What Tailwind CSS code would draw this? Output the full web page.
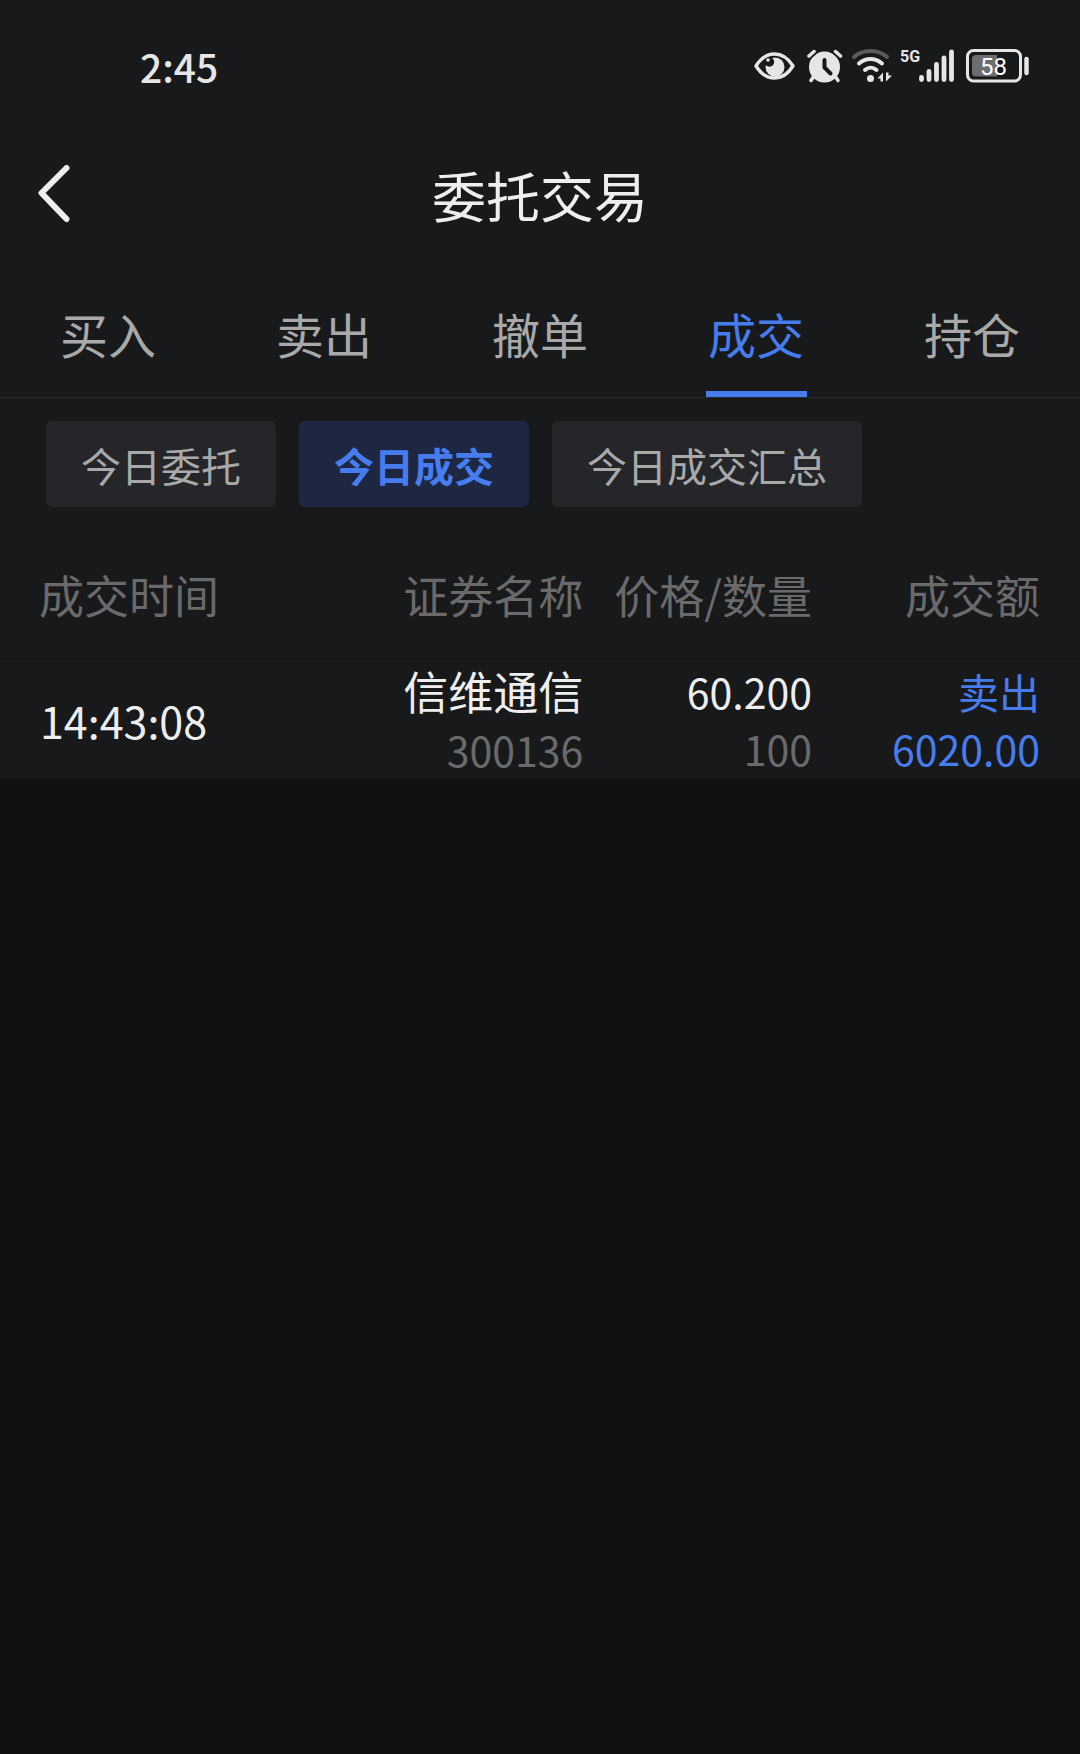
<!DOCTYPE html>
<html lang="zh-CN">
<head>
    <meta charset="UTF-8">
    <meta name="viewport" content="width=device-width, initial-scale=1.0">
    <title>委托交易</title>
    <script src="https://cdn.jsdelivr.net/npm/@tailwindcss/browser@4"></script>
</head>
<body class="bg-[#101113] min-h-screen font-['Noto_Sans_CJK_SC',sans-serif] text-[#eeeeee]">
    <div class="bg-[#18191b]">
        <!-- Status bar -->
        <div class="flex h-[131px] items-center justify-between pl-[140px] pr-[50px] text-[#e6e6e6]">
            <span class="text-[39px] leading-[60px] font-medium">2:45</span>
            <div class="flex items-center gap-2">
                <svg class="mr-1" width="41" height="34" viewBox="0 0 41 34" fill="none">
                    <path d="M2 17C7 9 13 5 20.500 5S34 9 39 17C34 25 28 29 20.500 29S7 25 2 17Z" stroke="currentColor" stroke-width="3.400" stroke-linejoin="round"/>
                    <circle cx="21" cy="18" r="9.500" fill="currentColor"/>
                    <circle cx="15.500" cy="13" r="4.700" fill="#18191b"/>
                    <circle cx="14" cy="11" r="1.800" fill="currentColor"/>
                </svg>
                <svg width="36" height="34" viewBox="0 0 36 34" fill="none" stroke-linecap="round" stroke-linejoin="round">
                    <circle cx="17.500" cy="18" r="15.500" fill="currentColor"/>
                    <path d="M2 7L7 2.500M33.500 7L28.500 2.500" stroke="#18191b" stroke-width="7"/>
                    <path d="M2 7L7 2.500M33.500 7L28.500 2.500" stroke="currentColor" stroke-width="3.500"/>
                    <path d="M7 27L4 31.500M28 27L31 31.500" stroke="currentColor" stroke-width="3.500"/>
                    <path d="M17.500 11V18.500L23.500 24.500" stroke="#18191b" stroke-width="4"/>
                </svg>
                <svg width="41" height="34" viewBox="0 0 41 34" fill="none" stroke="currentColor" stroke-width="4" stroke-linecap="round">
                    <path d="M3 8C12 0 27 0 36 8" stroke="#5a5b5d"/>
                    <path d="M8 14.500C15 8.500 24 8.500 31 14.500"/>
                    <path d="M14 21C17.500 18 22 18 25.500 21"/>
                    <circle cx="19.500" cy="29.500" r="3.500" fill="currentColor" stroke="none"/>
                    <path d="M26.500 29.500L32 23.500V32.500H29.500V29.500ZM41 26.500L35 32.500V23.500H37.500V26.500Z" fill="currentColor" stroke="none"/>
                </svg>
                <div class="flex items-start">
                    <span class="w-[19px] font-[Roboto] text-[16px] leading-4 font-bold">5G</span>
                    <svg width="35" height="34" viewBox="0 0 35 34" fill="none" stroke="currentColor" stroke-width="4.800" stroke-linecap="round">
                        <path d="M2.500 28.500V30.500M10 22.500V30.500M17.500 15.500V30.500M25 9V30.500M32.500 3V30.500"/>
                    </svg>
                </div>
                <svg class="ml-1" width="64" height="34" viewBox="0 0 64 34" fill="none">
                    <rect x="1.500" y="1.500" width="53" height="30.500" rx="6" stroke="currentColor" stroke-width="3"/>
                    <path d="M10 6H31V27.500H10A4 4 0 0 1 6 23.500V10A4 4 0 0 1 10 6Z" fill="#6c6d6f"/>
                    <path d="M60.500 10V24" stroke="currentColor" stroke-width="4.500" stroke-linecap="round"/>
                    <text x="27.500" y="26" text-anchor="middle" fill="#ffffff" font-family="Roboto" font-size="24">58</text>
                </svg>
            </div>
        </div>

        <!-- Title bar -->
        <header class="grid h-[125px] grid-cols-[1fr_auto_1fr] items-center">
            <button type="button" aria-label="返回" class="w-fit py-6 pl-9 pr-6">
                <svg width="36" height="58" viewBox="0 0 36 58" fill="none" stroke="#eeeef0" stroke-width="6" stroke-linecap="round" stroke-linejoin="round">
                    <path d="M30.500 3L5.500 28L30.500 54"/>
                </svg>
            </button>
            <h1 class="pt-[2px] text-[54px] leading-[78px]">委托交易</h1>
        </header>

        <!-- Main tabs -->
        <nav class="grid grid-cols-5 border-b border-[#28292b] text-center text-[48px] leading-[60px] text-[#a9a9a9]">
            <a href="#" class="pt-[47px] pb-[34px]">买入</a>
            <a href="#" class="pt-[47px] pb-[34px]">卖出</a>
            <a href="#" class="pt-[47px] pb-[34px]">撤单</a>
            <a href="#" aria-current="page" class="mx-auto w-[101px] border-b-6 border-[#477cee] pt-[47px] pb-7 text-[#477cee]">成交</a>
            <a href="#" class="pt-[47px] pb-[34px]">持仓</a>
        </nav>

        <!-- Sub filters -->
        <div class="flex gap-[23px] px-[46px] pt-[23px] text-[40px] leading-[60px] text-[#a9a9a9]">
            <button type="button" class="rounded-md bg-[#252629] px-[35px] pt-[14px] pb-3">今日委托</button>
            <button type="button" aria-pressed="true" class="rounded-md bg-[#1d2741] px-[35px] pt-[14px] pb-3 font-bold text-[#477cee]">今日成交</button>
            <button type="button" class="rounded-md bg-[#252629] px-[35px] pt-[14px] pb-3">今日成交汇总</button>
        </div>

        <table class="w-full table-fixed text-right text-[41px]">
            <thead class="text-[45px] leading-[60px] text-[#6a6a6a]">
                <tr class="border-b border-[#101113]">
                    <th scope="col" class="w-[33%] pt-[58px] pb-[33px] pl-[39px] text-left font-normal">成交时间</th>
                    <th scope="col" class="w-[21%] pt-[58px] pb-[33px] font-normal">证券名称</th>
                    <th scope="col" class="pt-[58px] pb-[33px] font-normal whitespace-nowrap">价格/数量</th>
                    <th scope="col" class="w-[268px] pt-[58px] pb-[33px] pr-10 font-normal">成交额</th>
                </tr>
            </thead>
            <tbody class="leading-[57px]">
                <tr>
                    <td class="pt-[2px] pl-10 text-left text-[43px]">14:43:08</td>
                    <td class="pt-[2px] leading-[59px]">
                        <div class="text-[45px]">信维通信</div>
                        <div class="text-[#6a6a6a]">300136</div>
                    </td>
                    <td class="pt-[2px]">
                        <div>60.200</div>
                        <div class="text-[#6a6a6a]">100</div>
                    </td>
                    <td class="pt-[2px] pr-10 text-[#477cee]">
                        <div>卖出</div>
                        <div>6020.00</div>
                    </td>
                </tr>
            </tbody>
        </table>
    </div>
</body>
</html>
